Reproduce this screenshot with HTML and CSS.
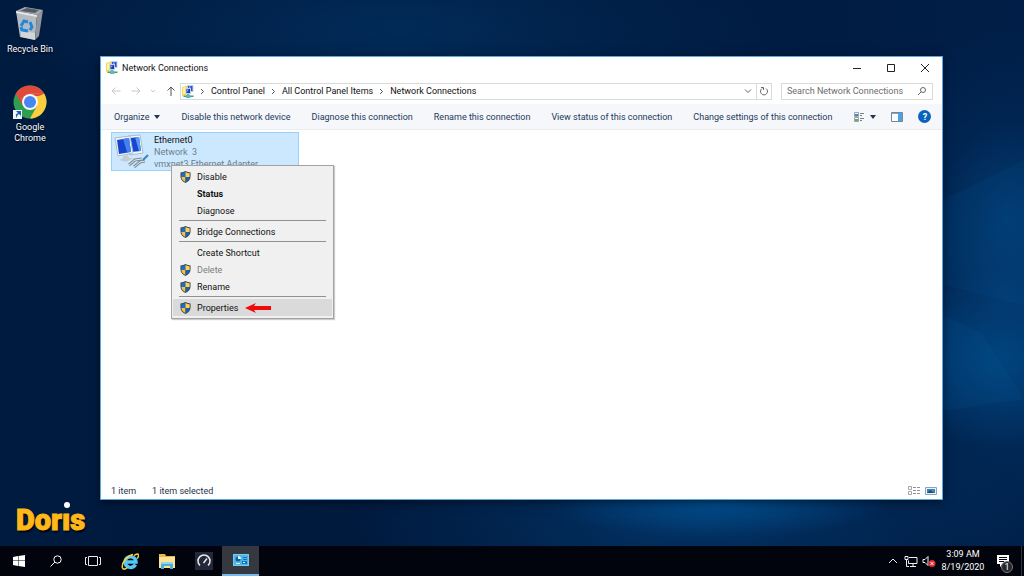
FILE: index.html
```
<!DOCTYPE html>
<html lang="en">

<head>
    <meta charset="UTF-8">
    <meta name="viewport" content="width=device-width, initial-scale=1.0">
    <title>Network Connections</title>
    <link rel="stylesheet" href="styles.css">
</head>

<body>

    <!-- shared icons -->
    <svg class="sprite" aria-hidden="true">
        <symbol id="shield" viewBox="0 0 24 26">
            <path fill="#3c4650" d="M12 0C9 2 5 3 1 3v9c0 6 4 11 11 14 7-3 11-8 11-14V3c-4 0-8-1-11-3z" />
            <path fill="#1b6fc4" d="M12 2C9 4 6 5 3 5v8h9z" />
            <path fill="#ffd257" d="M12 2c3 2 6 3 9 3v8h-9z" />
            <path fill="#f7c13c" d="M3 13h9v11c-6-3-9-7-9-11z" />
            <path fill="#1760b4" d="M21 13h-9v11c6-3 9-7 9-11z" />
        </symbol>
        <symbol id="netfolder" viewBox="0 0 24 26">
            <path fill="#f4d65c" d="M0 4l10-3v19l-10 2z" />
            <path fill="#fff3a8" d="M2 5l5-1v13l-5 1z" />
            <path fill="#c3d0e0" d="M10 0h13v14H10z" />
            <path fill="#2454d8" d="M12 2h9v10h-9z" />
            <path fill="#8db6ff" d="M14 3h4l-4 6z" />
            <path fill="#c3d0e0" d="M7 6h11v12H7z" />
            <path fill="#1738b8" d="M9 8h7v8H9z" />
            <path fill="#7ca5f8" d="M10 9h4l-4 5z" />
            <path fill="#8f9dac" d="M10 18h5v3h-5z" />
            <path fill="#38aa4c" d="M3 21h20v3H3z" />
            <path fill="#58b9c8" d="M8 20h9v6H8z" />
        </symbol>
    </svg>

    <main class="desktop">

        <svg class="wallpaper" viewBox="0 0 1024 546" preserveAspectRatio="none" aria-hidden="true">
            <defs>
                <radialGradient id="glow">
                    <stop offset="0" stop-color="#00569a" />
                    <stop offset="1" stop-color="#00569a" stop-opacity="0" />
                </radialGradient>
                <radialGradient id="haze">
                    <stop offset="0" stop-color="#023264" />
                    <stop offset="1" stop-color="#023264" stop-opacity="0" />
                </radialGradient>
            </defs>
            <ellipse cx="400" cy="30" rx="380" ry="110" fill="url(#haze)" opacity=".7" />
            <ellipse cx="690" cy="520" rx="340" ry="120" fill="url(#haze)" />
            <ellipse cx="720" cy="504" rx="170" ry="34" fill="url(#glow)" opacity=".7" />
            <ellipse cx="1010" cy="300" rx="170" ry="280" fill="url(#haze)" />
            <ellipse cx="1000" cy="360" rx="110" ry="90" fill="url(#glow)" opacity=".55" />
            <ellipse cx="1010" cy="220" rx="70" ry="100" fill="url(#glow)" opacity=".35" />
            <path d="M942 200l82-40v146l-82-22z" fill="#0864a8" opacity=".1" />
            <path d="M942 315l40 18 42 66-82 12z" fill="#0864a8" opacity=".12" />
        </svg>

        <nav class="shortcuts" aria-label="Desktop">
            <a href="#" class="shortcut">
                <svg class="shortcut-icon" viewBox="0 0 34 36" aria-hidden="true">
                    <path fill="#a3a9ae" d="M3 5l9-4 18 3-5 5z" />
                    <path fill="#555d64" d="M7 5l7-3 12 2-4 3z" />
                    <path fill="#b4babf" d="M3 5l21 4-2 25-15-3z" />
                    <path fill="#8f969c" d="M24 9l6-5-4 26-4 4z" />
                    <path fill="#e4e7e9" d="M3 5l21 4v2L3 7z" />
                    <path fill="#e6e9ea" d="M8 25l14 2v7L8 31z" opacity=".6" />
                    <g fill="none" stroke="#1f87dc" stroke-width="3">
                        <path d="M8 20l3-5 4 1" />
                        <path d="M17 16l2 5-2 3" />
                        <path d="M15 25l-6-1-1-3" />
                    </g>
                </svg>
                <span>Recycle Bin</span>
            </a>
            <a href="#" class="shortcut">
                <svg class="shortcut-icon" viewBox="0 0 34 36" aria-hidden="true">
                    <circle cx="17" cy="18" r="16.500" fill="#2f9e50" />
                    <path fill="#df4a3c" d="M2.700 9.800A16.500 16.500 0 0 1 31.300 9.800L17 18l-7 4z" />
                    <path fill="#fccd3c" d="M31.300 9.800A16.500 16.500 0 0 1 17 34.500l7-12.500-7-12.200z" />
                    <path fill="#df4a3c" d="M14 9.800h17.300L26 12H14z" />
                    <circle cx="17" cy="18" r="8" fill="#f4f7f5" />
                    <circle cx="17" cy="18" r="6" fill="#4886ef" />
                    <path fill="#f2f5f8" d="M0 26h9v9H0z" />
                    <path fill="#1c5fa8" d="M3 27h5v5l-2-2c-2 1-2 2-2 4-2-3-1-4 1-5z" />
                </svg>
                <span>Google Chrome</span>
            </a>
        </nav>

        <div class="brand">
            <span>Dorıs</span>
            <i class="brand-dot"></i>
        </div>

        <section class="window">

            <header class="titlebar">
                <svg class="folder-icon" aria-hidden="true"><use href="#netfolder" /></svg>
                <h1>Network Connections</h1>
                <div class="window-buttons">
                    <button aria-label="Minimize"><svg viewBox="0 0 10 10"><path d="M1 5.500h8" /></svg></button>
                    <button aria-label="Maximize"><svg viewBox="0 0 10 10"><path d="M1.500 1.500h7v7h-7z" /></svg></button>
                    <button aria-label="Close"><svg viewBox="0 0 10 10"><path d="M1 1l8 8M9 1l-8 8" /></svg></button>
                </div>
            </header>

            <div class="address-row">
                <div class="history">
                    <button aria-label="Back" disabled><svg viewBox="0 0 10 10"><path d="M9.500 5H1M4.500 1.500L1 5l3.500 3.500" /></svg></button>
                    <button aria-label="Forward" disabled><svg viewBox="0 0 10 10"><path d="M.500 5H9M5.500 1.500L9 5 5.500 8.500" /></svg></button>
                    <button class="recent" aria-label="Recent locations" disabled><svg viewBox="0 0 10 10"><path d="M3 4l2 2 2-2" /></svg></button>
                    <button aria-label="Up"><svg viewBox="0 0 10 10"><path d="M5 10V1M1.500 4.500L5 1l3.500 3.500" /></svg></button>
                </div>
                <div class="address">
                    <svg class="folder-icon" aria-hidden="true"><use href="#netfolder" /></svg>
                    <svg class="crumb-arrow" viewBox="0 0 5 7"><path d="M1 1l2.500 2.500L1 6" /></svg>
                    <a href="#">Control Panel</a>
                    <svg class="crumb-arrow" viewBox="0 0 5 7"><path d="M1 1l2.500 2.500L1 6" /></svg>
                    <a href="#">All Control Panel Items</a>
                    <svg class="crumb-arrow" viewBox="0 0 5 7"><path d="M1 1l2.500 2.500L1 6" /></svg>
                    <a href="#">Network Connections</a>
                    <button class="address-button push" aria-label="Previous locations"><svg viewBox="0 0 10 10"><path d="M2 3.500l3 3 3-3" /></svg></button>
                    <button class="address-button refresh" aria-label="Refresh"><svg viewBox="0 0 10 10"><path d="M3 2.500a3.500 3.500 0 1 0 4 0M2 1.500h2.500V4" /></svg></button>
                </div>
                <div class="search">
                    <input type="text" placeholder="Search Network Connections" aria-label="Search Network Connections">
                    <svg viewBox="0 0 10 10" aria-hidden="true"><circle cx="6" cy="4" r="2.500" /><path d="M4 6L1 9" /></svg>
                </div>
            </div>

            <div class="toolbar">
                <button>Organize <i class="caret"></i></button>
                <button>Disable this network device</button>
                <button>Diagnose this connection</button>
                <button>Rename this connection</button>
                <button>View status of this connection</button>
                <button>Change settings of this connection</button>
                <div class="toolbar-icons">
                    <button class="view-button" aria-label="Change your view">
                        <svg viewBox="0 0 12 12">
                            <path fill="none" stroke="#9aa5ad" d="M1.500 1.500h4v4h-4zM1.500 6.500h4v4h-4z" />
                            <path fill="#4b83c4" d="M2 3h3v2H2z" />
                            <path fill="#6fa965" d="M2 8h3v2H2z" />
                            <path fill="#77838d" d="M7 2h4v1H7zM7 4h2v1H7zM7 7h4v1H7zM7 9h2v1H7z" />
                        </svg>
                        <i class="caret"></i>
                    </button>
                    <button aria-label="Preview pane">
                        <svg viewBox="0 0 12 12">
                            <path fill="#fff" stroke="#71889b" d="M.500 1.500h11v9H.500z" />
                            <path fill="#8ba5ba" d="M1 2h10v1H1z" />
                            <path fill="#4aa3e3" d="M7 2h4v8H7z" />
                        </svg>
                    </button>
                    <button class="help" aria-label="Help">?</button>
                </div>
            </div>

            <div class="content">
                <article class="connection">
                    <svg class="connection-icon" viewBox="0 0 36 34" aria-hidden="true">
                        <path fill="#f3f7fa" stroke="#a9bccb" d="M14 2l12-1 3 18-13 2z" />
                        <path fill="#1646d4" d="M16 4l9-1 2 14-10 1z" />
                        <path fill="#5c97f4" d="M21 3l4 0 2 14-2 0z" />
                        <path fill="#f3f7fa" stroke="#a9bccb" d="M1 4l15-2 3 17-15 3z" />
                        <path fill="#1544cf" d="M3 6l12-2 2 14L5 20z" />
                        <path fill="#4382ee" d="M9 5l6-1 2 14-4 0z" />
                        <path fill="#c4ccd2" d="M9 22l5-1 1 3 5 0-8 4-7-2 4-2z" />
                        <path fill="none" stroke="#7c8f9f" stroke-width="3" d="M15 31l6-5 7-1M20 33l6-5 5-1" />
                        <path fill="none" stroke="#e5e9ec" stroke-width="1" d="M15 31l6-5 7-1M20 33l6-5 5-1" />
                        <path fill="none" stroke="#3d82bc" stroke-width="2" d="M29 26l5-5" />
                    </svg>
                    <div class="connection-text">
                        <h2>Ethernet0</h2>
                        <p>Network  3</p>
                        <p>vmxnet3 Ethernet Adapter</p>
                    </div>
                </article>

                <div class="context-menu" role="menu">
                    <button role="menuitem"><svg><use href="#shield" /></svg>Disable</button>
                    <button role="menuitem" class="default">Status</button>
                    <button role="menuitem">Diagnose</button>
                    <hr>
                    <button role="menuitem"><svg><use href="#shield" /></svg>Bridge Connections</button>
                    <hr>
                    <button role="menuitem">Create Shortcut</button>
                    <button role="menuitem" disabled><svg><use href="#shield" /></svg>Delete</button>
                    <button role="menuitem"><svg><use href="#shield" /></svg>Rename</button>
                    <hr>
                    <button role="menuitem" class="hover">
                        <svg><use href="#shield" /></svg>Properties
                        <svg class="pointer" viewBox="0 0 26 10"><path fill="#f00a0a" d="M0 5l11-5-2 3h17v4H9l2 3z" /></svg>
                    </button>
                </div>
            </div>

            <footer class="statusbar">
                <span>1 item</span>
                <span>1 item selected</span>
                <div class="view-modes">
                    <button aria-label="Details">
                        <svg viewBox="0 0 12 10">
                            <path fill="none" stroke="#a2a7ab" d="M.500.500h3v3h-3zM.500 5.500h3v3h-3z" />
                            <path fill="#8b9196" d="M5 1h3v1H5zM9 1h3v1H9zM5 4h3v1H5zM9 4h3v1H9zM5 7h3v1H5zM9 7h3v1H9z" />
                        </svg>
                    </button>
                    <button aria-label="Large icons">
                        <svg viewBox="0 0 12 10">
                            <path fill="#e9f4fb" stroke="#8aa5b8" d="M.500 1.500h11v7H.500z" />
                            <path fill="#3f83bb" d="M2 3h8v4H2z" />
                            <path fill="#214c64" d="M2 7l3-3 4 3z" />
                        </svg>
                    </button>
                </div>
            </footer>

        </section>

    </main>

    <footer class="taskbar">
        <button aria-label="Start">
            <svg class="icon-small" viewBox="0 0 12 12"><path fill="#fff" d="M0 2l5-1v4.500H0zM5.500 1L12 0v5.500H5.500zM0 6h5v5l-5-1zM5.500 6H12v6l-6.500-1z" /></svg>
        </button>
        <button aria-label="Search">
            <svg class="icon-small" viewBox="0 0 12 12"><g fill="none" stroke="#fff"><circle cx="7.500" cy="4.500" r="3.700" /><path d="M4.800 7.200L.500 11.500" /></g></svg>
        </button>
        <button aria-label="Task View">
            <svg class="icon-large" viewBox="0 0 18 18"><path fill="none" stroke="#e8e8e8" d="M4.500 4.500h9v9h-9zM3 5.500H1.500v7H3M15 5.500h1.500v7H15" /></svg>
        </button>
        <button aria-label="Internet Explorer">
            <svg class="icon-large" viewBox="0 0 18 18">
                <path fill="none" stroke="#55c8f5" stroke-width="3.500" d="M14.500 12.500C11 18 4 15 4 10c0-7 11-7 11 0H5" />
                <path fill="none" stroke="#f7d33c" stroke-width="1.500" d="M13 3.500c6-4 5 1 3 3M12 2.500C6 4 0 11 1.500 16c1 2 3 1 5-.500" />
            </svg>
        </button>
        <button aria-label="File Explorer">
            <svg class="icon-large" viewBox="0 0 18 18">
                <path fill="#e5b84e" d="M1 2h6l1 2h9v12H1z" />
                <path fill="#fde394" d="M1 5h16v11H1z" />
                <path fill="#4eafd6" d="M3 10h12v7h-3v-3H6v3H3z" />
                <path fill="#8ed4ed" d="M3 10h12v2H3z" />
            </svg>
        </button>
        <button aria-label="Dashboard">
            <svg class="icon-large" viewBox="0 0 18 18">
                <path fill="#24263a" d="M0 0h18v18H0z" />
                <path fill="none" stroke="#e7e9ef" stroke-width="1.500" d="M5 13.500a6 6 0 1 1 8 0M8.500 11L12 6.500" />
            </svg>
        </button>
        <button class="active" aria-label="Network Connections">
            <svg class="icon-large" viewBox="0 0 18 18">
                <path fill="#75cdf4" d="M1 3h16v12H1z" />
                <path fill="#2689c7" d="M2 4h14v10H2z" />
                <path fill="#64c3f0" d="M2 4h14v10H2z" opacity=".7" />
                <circle cx="6" cy="8" r="2.500" fill="#0f629b" />
                <path fill="#e3f7ff" d="M6 5v3h3a3 3 0 0 0-3-3z" />
                <path fill="#1673ad" d="M11 6h4v1h-4zM11 8h4v1h-4zM10 10h5v3h-5z" />
                <path fill="#d5f2ff" d="M4 12h4v1H4zM11 11h2v1h-2z" />
            </svg>
        </button>

        <div class="tray">
            <button aria-label="Show hidden icons"><svg viewBox="0 0 14 14"><path d="M3 9l4-4 4 4" /></svg></button>
            <button aria-label="Network"><svg viewBox="0 0 14 14"><path d="M5 3.500h8v6H4.500v-3M6 12.500h6M9 10v2M1 2.500h3v3H1zM2.500 5.500v7H5" /></svg></button>
            <button aria-label="Volume muted">
                <svg viewBox="0 0 14 14">
                    <path d="M1 5.500h2l3-3v9l-3-3H1z" />
                    <circle class="mute" cx="10" cy="9.500" r="3.500" />
                    <path d="M8.500 8l3 3M11.500 8l-3 3" />
                </svg>
            </button>
            <button class="clock">
                <time>3:09 AM</time>
                <time>8/19/2020</time>
            </button>
            <button class="notifications" aria-label="Notifications">
                <svg viewBox="0 0 14 14">
                    <path class="bubble" d="M1 1h12v9H7l-3 3v-3H1z" />
                    <path class="lines" d="M3 3.500h8M3 5.500h8M3 7.500h5" />
                </svg>
                <span class="badge">1</span>
            </button>
        </div>
    </footer>

</body>

</html>
```

FILE: styles.css
```
* {
    box-sizing: border-box;
}

body {
    margin: 0;
    height: 100vh;
    display: flex;
    flex-direction: column;
    overflow: hidden;
    font-family: Roboto, "Open Sans", sans-serif;
    font-size: 9px;
    line-height: 12px;
    color: #111;
}

button {
    display: flex;
    align-items: center;
    justify-content: center;
    margin: 0;
    padding: 0;
    border: 0;
    background: none;
    font: inherit;
    color: inherit;
    white-space: nowrap;
}

a {
    color: inherit;
    text-decoration: none;
    white-space: nowrap;
}

h1,
h2,
p {
    margin: 0;
    font-size: 9px;
    font-weight: 400;
}

.sprite {
    position: absolute;
    width: 0;
    height: 0;
}

/* desktop */

.desktop {
    position: relative;
    flex: 1;
    min-height: 0;
    background: linear-gradient(90deg, #001b40, #00193c 50%, #001e47);
}

.wallpaper {
    position: absolute;
    width: 100%;
    height: 100%;
}

.shortcuts {
    position: absolute;
    top: 6px;
    left: 0;
    display: flex;
    flex-direction: column;
    gap: 29px;
}

.shortcut {
    width: 60px;
    display: flex;
    flex-direction: column;
    align-items: center;
    gap: 2px;
    padding: 0 8px;
    color: #fff;
    line-height: 11px;
    text-align: center;
    text-shadow: 0 1px 2px #000;
}

.shortcut:last-child {
    white-space: normal;
}

.shortcut-icon {
    width: 34px;
    height: 36px;
}

.brand {
    position: absolute;
    left: 16px;
    bottom: 10px;
    color: #ffb719;
    font-family: Roboto, sans-serif;
    font-size: 29px;
    font-weight: 900;
    line-height: 32px;
    text-shadow: 1px 2px 2px #000;
    -webkit-text-stroke: 1px #ffb719;
}

.brand-dot {
    position: absolute;
    top: -2px;
    right: 15px;
    width: 6px;
    height: 6px;
    border-radius: 50%;
    background: #fff;
}

/* window */

.window {
    position: absolute;
    top: 56px;
    right: 81px;
    bottom: 46px;
    left: 100px;
    display: flex;
    flex-direction: column;
    border: 1px solid #5ba8e4;
    background: #fff;
    box-shadow: 0 2px 8px rgba(0, 0, 0, 0.5);
}

.titlebar {
    display: flex;
    align-items: center;
    gap: 4px;
    height: 21px;
    padding-left: 5px;
}

.folder-icon {
    width: 12px;
    height: 13px;
}

.window-buttons {
    display: flex;
    margin-left: auto;
}

.window-buttons button {
    width: 34px;
    height: 20px;
}

.window-buttons svg,
.history svg,
.address-button svg,
.search svg {
    width: 10px;
    height: 10px;
    fill: none;
    stroke: #222;
}

.address-row {
    display: flex;
    align-items: center;
    gap: 9px;
    height: 26px;
    padding: 0 9px 0 7px;
}

.history {
    display: flex;
    gap: 5px;
}

.history button {
    width: 15px;
}

.history .recent {
    width: 10px;
}

.history svg {
    stroke: #555;
}

.history button:disabled svg {
    stroke: #c8c8c8;
}

.address,
.search {
    display: flex;
    align-items: center;
    height: 17px;
    border: 1px solid #d9d9d9;
}

.address {
    flex: 1;
    gap: 6px;
    margin-left: -7px;
    padding-left: 1px;
}

.crumb-arrow {
    width: 5px;
    height: 7px;
    fill: none;
    stroke: #555;
}

.push {
    margin-left: auto;
}

.address-button svg,
.search svg {
    stroke: #666;
}

.refresh {
    height: 15px;
    padding: 0 2px;
    margin-left: -3px;
    border-left: 1px solid #d9d9d9;
}

.search {
    width: 152px;
    padding: 0 5px;
}

.search input {
    flex: 1;
    min-width: 0;
    padding: 0;
    border: 0;
    outline: 0;
    background: none;
    font: inherit;
}

.search input::placeholder {
    color: #6d6d6d;
}

.toolbar {
    display: flex;
    align-items: center;
    gap: 21px;
    height: 26px;
    padding: 0 11px 0 13px;
    border-bottom: 1px solid #e8edf2;
    background: #f5f7fa;
    color: #1e395b;
}

.toolbar svg {
    width: 12px;
    height: 12px;
}

.caret {
    margin-left: 5px;
    border: 3px solid transparent;
    border-top: 4px solid #24344a;
    border-bottom: 0;
}

.toolbar-icons {
    display: flex;
    align-items: center;
    gap: 15px;
    margin-left: auto;
}

.help {
    width: 13px;
    height: 13px;
    border-radius: 50%;
    background: #0863bd;
    color: #fff;
    font-weight: 700;
}

.content {
    position: relative;
    flex: 1;
    padding: 2px 10px;
}

.connection {
    display: flex;
    gap: 4px;
    width: 188px;
    height: 39px;
    padding: 1px 2px;
    border: 1px solid #99d1ff;
    background: #cce8ff;
}

.connection-icon {
    width: 36px;
    height: 34px;
}

.connection-text p {
    color: #6e7d89;
    white-space: pre;
}

/* context menu */

.context-menu {
    position: absolute;
    top: 35px;
    left: 70px;
    width: 163px;
    padding: 2px 1px;
    border: 1px solid #a3a3a3;
    background: #f0f0f0;
    box-shadow: 1px 1px 1px rgba(0, 0, 0, 0.2);
}

.context-menu button {
    position: relative;
    justify-content: flex-start;
    width: 100%;
    height: 17px;
    padding-left: 24px;
    color: #111;
}

.context-menu svg {
    width: 11px;
    height: 12px;
    margin-left: -17px;
    margin-right: 6px;
}

.context-menu .pointer {
    width: 26px;
    height: 10px;
    margin: 0 0 0 7px;
}

.context-menu .default {
    font-weight: 700;
}

.context-menu button:disabled {
    color: #7d7d7d;
}

.context-menu .hover {
    background: #dadada;
}

.context-menu hr {
    height: 1px;
    margin: 1px 6px 2px;
    border: 0;
    background: #919191;
}

.statusbar {
    display: flex;
    align-items: center;
    gap: 16px;
    height: 17px;
    padding: 0 5px 0 10px;
    color: #24344a;
}

.view-modes {
    display: flex;
    gap: 5px;
    margin-left: auto;
}

.view-modes svg {
    width: 12px;
    height: 10px;
}

/* taskbar */

.taskbar {
    display: flex;
    height: 30px;
    background: #02040d;
    color: #fff;
}

.taskbar > button {
    width: 37px;
    padding-left: 1px;
}

.taskbar > .active {
    border-bottom: 2px solid #76b9ed;
    background: #35383f;
}

.icon-small {
    width: 12px;
    height: 12px;
}

.icon-large {
    width: 18px;
    height: 18px;
}

.tray {
    display: flex;
    gap: 4px;
    margin-left: auto;
    padding-right: 2px;
}

.tray svg {
    width: 14px;
    height: 14px;
    fill: none;
    stroke: #f0f0f0;
}

.tray .mute {
    fill: #e02b35;
    stroke: none;
}

.clock {
    flex-direction: column;
    width: 46px;
    line-height: 13px;
}

.notifications {
    position: relative;
    width: 32px;
    padding-right: 6px;
    border-right: 1px solid #2d313b;
}

.notifications .bubble {
    fill: #fff;
    stroke: none;
}

.notifications .lines {
    stroke: #02040d;
}

.badge {
    position: absolute;
    right: 8px;
    bottom: 3px;
    width: 12px;
    height: 12px;
    border: 1px solid #777;
    border-radius: 50%;
    background: #25282f;
    line-height: 10px;
}
```
